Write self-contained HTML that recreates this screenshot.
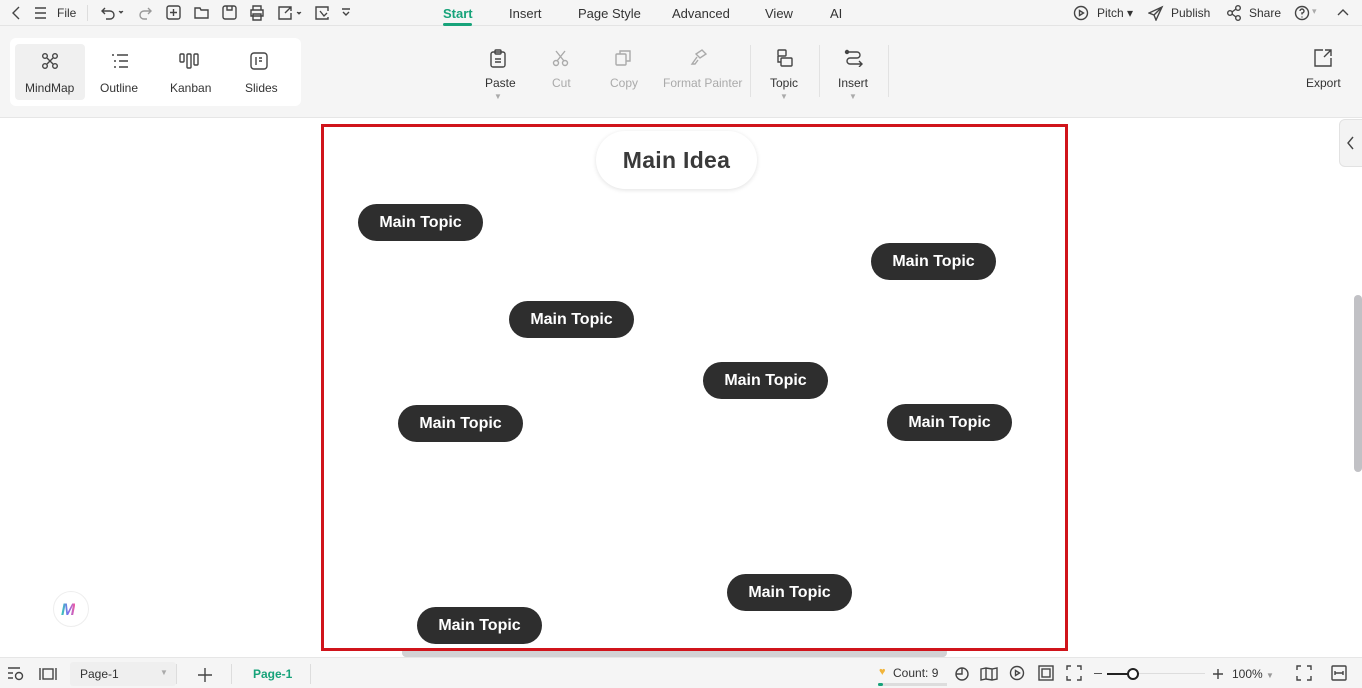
<!DOCTYPE html>
<html><head><meta charset="utf-8"><style>
*{margin:0;padding:0;box-sizing:border-box}
body{width:1362px;height:688px;overflow:hidden;position:relative;background:#fff;font-family:"Liberation Sans",sans-serif;color:#333}
.a{position:absolute}
.t{font-size:12px;color:#333;white-space:nowrap}
.g{color:#aaa}
svg{position:absolute;fill:none;stroke:#444;stroke-width:1.4}
.topic{position:absolute;width:125px;height:37px;border-radius:19px;background:#2e2e2e;color:#fff;font-weight:bold;font-size:16px;line-height:37px;text-align:center}
</style></head><body>
<div class="a" style="left:0;top:0;width:1362px;height:118px;background:#f5f5f5;border-bottom:1px solid #e6e6e6"></div>
<div class="a" style="left:0;top:25px;width:1362px;height:1px;background:#e4e4e4"></div>
<svg style="left:10px;top:5px" width="12" height="16"><path d="M9 2 L3 8 L9 14"/></svg>
<svg style="left:34px;top:6px" width="14" height="14"><path d="M1 2H12M1 7H12M1 12H12"/></svg>
<div class="a t" style="left:57px;top:6px">File</div>
<div class="a" style="left:87px;top:5px;width:1px;height:16px;background:#ddd"></div>
<svg style="left:101px;top:5px" width="26" height="16"><path d="M4 3 L1 6 L4 9M1 6H9a4 4 0 0 1 0 8H5"/><path d="M18 6l2 2 2-2" stroke-width="1" fill="#666"/></svg>
<svg style="left:138px;top:5px" width="16" height="16"><path d="M10 3l3 3-3 3M13 6H6a4 4 0 0 0 0 8h3" stroke="#999"/></svg>
<svg style="left:166px;top:5px" width="16" height="16"><rect x="1" y="1" width="13" height="13" rx="2"/><path d="M7.5 4v7M4 7.5h7"/></svg>
<svg style="left:194px;top:5px" width="16" height="16"><path d="M1 3h5l1 2h7v8H1z"/></svg>
<svg style="left:222px;top:5px" width="16" height="16"><rect x="1" y="1" width="13" height="13" rx="2"/><path d="M5 1v4h5V1"/></svg>
<svg style="left:249px;top:5px" width="16" height="16"><path d="M4 5V1h8v4M2 5h12v6H2zM4 9h8v6H4z"/></svg>
<svg style="left:277px;top:5px" width="28" height="16"><path d="M10 2H2v12h12V8M8 8l6-6M10 2h4v4"/><path d="M20 7l2 2 2-2" fill="#666" stroke-width="1"/></svg>
<svg style="left:314px;top:5px" width="16" height="16"><path d="M14 6V2H2v12h12v-2M6 6l4 5 3-3"/></svg>
<svg style="left:340px;top:8px" width="12" height="10"><path d="M2 1h8M3 4l3 3 3-3"/></svg>
<div class="a t" style="left:443px;top:6px;color:#17a37a;font-weight:bold;font-size:13px">Start</div>
<div class="a" style="left:443px;top:23px;width:29px;height:3px;background:#17a37a;border-radius:2px"></div>
<div class="a t" style="left:509px;top:6px;font-size:13px">Insert</div>
<div class="a t" style="left:578px;top:6px;font-size:13px">Page Style</div>
<div class="a t" style="left:672px;top:6px;font-size:13px">Advanced</div>
<div class="a t" style="left:765px;top:6px;font-size:13px">View</div>
<div class="a t" style="left:830px;top:6px;font-size:13px">AI</div>
<svg style="left:1073px;top:5px" width="16" height="16"><circle cx="8" cy="8" r="6.5"/><path d="M6.5 5.5v5l4-2.5z"/></svg>
<div class="a t" style="left:1097px;top:6px">Pitch ▾</div>
<svg style="left:1148px;top:5px" width="16" height="16"><path d="M14 2L1 8l5 2 2 5z M6 10l8-8"/></svg>
<div class="a t" style="left:1171px;top:6px">Publish</div>
<svg style="left:1226px;top:5px" width="16" height="16"><circle cx="4" cy="8" r="2.3"/><circle cx="12" cy="3" r="2.3"/><circle cx="12" cy="13" r="2.3"/><path d="M6 7l4-3M6 9l4 3"/></svg>
<div class="a t" style="left:1249px;top:6px">Share</div>
<svg style="left:1294px;top:5px" width="16" height="16"><circle cx="8" cy="8" r="6.5"/><path d="M6 6a2 2 0 1 1 2 2v1.5M8 11.5v1"/></svg>
<div class="a t g" style="left:1312px;top:6px;font-size:9px">▾</div>
<svg style="left:1336px;top:8px" width="14" height="10"><path d="M2 7l5-5 5 5"/></svg>
<div class="a" style="left:10px;top:38px;width:291px;height:68px;background:#fff;border-radius:6px"></div>
<div class="a" style="left:15px;top:44px;width:70px;height:56px;background:#f0f0f0;border-radius:4px"></div>
<svg style="left:41px;top:52px" width="18" height="18"><circle cx="4" cy="4" r="2.3"/><circle cx="14" cy="4" r="2.3"/><circle cx="4" cy="14" r="2.3"/><circle cx="14" cy="14" r="2.3"/><path d="M6 6l6 6M12 6l-6 6"/></svg>
<div class="a t" style="left:25px;top:81px">MindMap</div>
<svg style="left:111px;top:53px" width="18" height="16"><path d="M1 2h2M6 2h11M3 8h2M8 8h9M3 14h2M8 14h9"/></svg>
<div class="a t" style="left:100px;top:81px">Outline</div>
<svg style="left:179px;top:52px" width="20" height="18"><rect x="1" y="2" width="4" height="8" rx="1"/><rect x="8" y="2" width="4" height="14" rx="1"/><rect x="15" y="2" width="4" height="11" rx="1"/></svg>
<div class="a t" style="left:170px;top:81px">Kanban</div>
<svg style="left:250px;top:52px" width="18" height="18"><rect x="1" y="1" width="16" height="16" rx="3"/><path d="M6 5v8M9 6h3M9 9h3"/></svg>
<div class="a t" style="left:245px;top:81px">Slides</div>
<svg style="left:489px;top:49px" width="18" height="20"><rect x="2" y="3" width="14" height="15" rx="2"/><rect x="6" y="1" width="6" height="4" rx="1"/><path d="M6 10h6M6 13h6"/></svg>
<div class="a t" style="left:485px;top:76px">Paste</div>
<div class="a t g" style="left:494px;top:92px;font-size:8px">▼</div>
<svg style="left:552px;top:49px;stroke:#aaa" width="18" height="18"><circle cx="4" cy="14" r="2.5"/><circle cx="13" cy="14" r="2.5"/><path d="M5 12L13 2M12 12L4 2"/></svg>
<div class="a t g" style="left:552px;top:76px">Cut</div>
<svg style="left:614px;top:49px;stroke:#aaa" width="18" height="18"><rect x="2" y="5" width="10" height="11" rx="1"/><path d="M6 5V2h10v10h-4"/></svg>
<div class="a t g" style="left:610px;top:76px">Copy</div>
<svg style="left:690px;top:48px;stroke:#aaa" width="18" height="18"><path d="M12 2l4 4-6 4-4-4zM7 9l-5 7 3 0 3-4"/></svg>
<div class="a t g" style="left:663px;top:76px">Format Painter</div>
<div class="a" style="left:750px;top:45px;width:1px;height:52px;background:#e2e2e2"></div>
<svg style="left:776px;top:49px" width="18" height="18"><rect x="2" y="1" width="8" height="6" rx="1"/><rect x="5" y="9" width="11" height="8" rx="1"/><path d="M2 7v6h3"/></svg>
<div class="a t" style="left:770px;top:76px">Topic</div>
<div class="a t g" style="left:780px;top:92px;font-size:8px">▼</div>
<div class="a" style="left:819px;top:45px;width:1px;height:52px;background:#e2e2e2"></div>
<svg style="left:844px;top:49px" width="20" height="18"><circle cx="3" cy="3" r="1.5" fill="#444"/><path d="M3 3h10a3 3 0 0 1 0 6H6a3 3 0 0 0 0 6h12M15 12l3 3-3 3"/></svg>
<div class="a t" style="left:838px;top:76px">Insert</div>
<div class="a t g" style="left:849px;top:92px;font-size:8px">▼</div>
<div class="a" style="left:888px;top:45px;width:1px;height:52px;background:#e2e2e2"></div>
<svg style="left:1313px;top:48px" width="20" height="20"><path d="M10 2H2v16h16v-8M12 2h6v6M18 2l-7 7"/></svg>
<div class="a t" style="left:1306px;top:76px">Export</div>
<div class="a" style="left:1339px;top:119px;width:30px;height:48px;background:#f3f3f3;border:1px solid #e2e2e2;border-radius:6px"></div>
<svg style="left:1345px;top:135px" width="12" height="16"><path d="M8 2L3 8l5 6"/></svg>
<div class="a" style="left:1354px;top:295px;width:8px;height:177px;background:#c1c1c5;border-radius:4px"></div>
<div class="a" style="left:402px;top:648px;width:545px;height:9px;background:#d2d2d4;border-radius:4px"></div>
<div class="a" style="left:321px;top:124px;width:747px;height:527px;border:3px solid #d0141b"></div>
<div class="a" style="left:596px;top:131px;width:161px;height:58px;border-radius:29px;background:#fff;box-shadow:0 1px 5px rgba(0,0,0,.12);text-align:center;line-height:58px;font-size:23px;font-weight:bold;color:#3a3a3a;letter-spacing:0.3px">Main Idea</div>
<div class="topic" style="left:358px;top:204px">Main Topic</div>
<div class="topic" style="left:871px;top:243px">Main Topic</div>
<div class="topic" style="left:509px;top:301px">Main Topic</div>
<div class="topic" style="left:703px;top:362px">Main Topic</div>
<div class="topic" style="left:398px;top:405px">Main Topic</div>
<div class="topic" style="left:887px;top:404px">Main Topic</div>
<div class="topic" style="left:727px;top:574px">Main Topic</div>
<div class="topic" style="left:417px;top:607px">Main Topic</div>
<div class="a" style="left:53px;top:591px;width:36px;height:36px;border-radius:50%;border:1px solid #eee;background:#fff"></div>
<div class="a" style="left:61px;top:600px;font-weight:bold;font-style:italic;font-size:17px;background:linear-gradient(90deg,#2dd4b0,#7a6cf0,#f45ca0);-webkit-background-clip:text;color:transparent">M</div>
<div class="a" style="left:0;top:657px;width:1362px;height:31px;background:#f5f5f5;border-top:1px solid #e6e6e6"></div>
<svg style="left:7px;top:666px" width="18" height="16"><path d="M1 2h12M1 7h5M1 12h5"/><circle cx="12" cy="10" r="3.5"/></svg>
<svg style="left:39px;top:667px" width="18" height="14"><path d="M1 1v12M17 1v12"/><rect x="4" y="2" width="10" height="10"/></svg>
<div class="a" style="left:70px;top:662px;width:106px;height:24px;background:#efefef;border-radius:3px"></div>
<div class="a t" style="left:80px;top:667px">Page-1</div>
<div class="a t g" style="left:160px;top:668px;font-size:8px">▼</div>
<div class="a" style="left:176px;top:664px;width:1px;height:20px;background:#ddd"></div>
<svg style="left:197px;top:667px" width="16" height="16"><path d="M8 1v14M1 8h14"/></svg>
<div class="a" style="left:231px;top:664px;width:1px;height:20px;background:#ddd"></div>
<div class="a t" style="left:253px;top:667px;color:#17a37a;font-weight:bold">Page-1</div>
<div class="a" style="left:310px;top:664px;width:1px;height:20px;background:#ddd"></div>
<div class="a" style="left:879px;top:666px;color:#f1b43a;font-size:11px">♥</div>
<div class="a t" style="left:893px;top:666px">Count: 9</div>
<div class="a" style="left:878px;top:683px;width:69px;height:3px;background:#ddd"><div style="width:5px;height:3px;background:#17a37a;border-radius:2px"></div></div>
<svg style="left:954px;top:666px" width="16" height="16"><circle cx="8" cy="8" r="6"/><path d="M8 2v6H2"/></svg>
<svg style="left:980px;top:667px" width="18" height="14"><path d="M1 2l5-1 6 1 5-1v11l-5 1-6-1-5 1zM6 1v11M12 2v11"/></svg>
<svg style="left:1009px;top:665px" width="16" height="16"><circle cx="8" cy="8" r="6.5"/><path d="M6.5 5.5v5l4-2.5z"/></svg>
<svg style="left:1038px;top:665px" width="16" height="16"><rect x="1" y="1" width="14" height="14"/><rect x="4" y="4" width="8" height="8"/></svg>
<svg style="left:1066px;top:665px" width="16" height="16"><path d="M1 5V1h4M11 1h4v4M15 11v4h-4M5 15H1v-4"/></svg>
<div class="a" style="left:1094px;top:673px;width:8px;height:1px;background:#555"></div>
<div class="a" style="left:1107px;top:673px;width:26px;height:2px;background:#222"></div>
<div class="a" style="left:1133px;top:673px;width:72px;height:1px;background:#ddd"></div>
<div class="a" style="left:1127px;top:668px;width:12px;height:12px;border-radius:50%;border:2px solid #222;background:#fff"></div>
<svg style="left:1212px;top:668px" width="12" height="12"><path d="M6 1v10M1 6h10"/></svg>
<div class="a t" style="left:1232px;top:667px">100% <span style="font-size:8px;color:#999">▼</span></div>
<svg style="left:1296px;top:665px" width="16" height="16"><path d="M1 5V1h4M11 1h4v4M15 11v4h-4M5 15H1v-4"/></svg>
<svg style="left:1331px;top:665px" width="16" height="16"><rect x="1" y="1" width="14" height="14" rx="1"/><path d="M4 8h8M4 6v4M12 6v4"/></svg>
</body></html>
